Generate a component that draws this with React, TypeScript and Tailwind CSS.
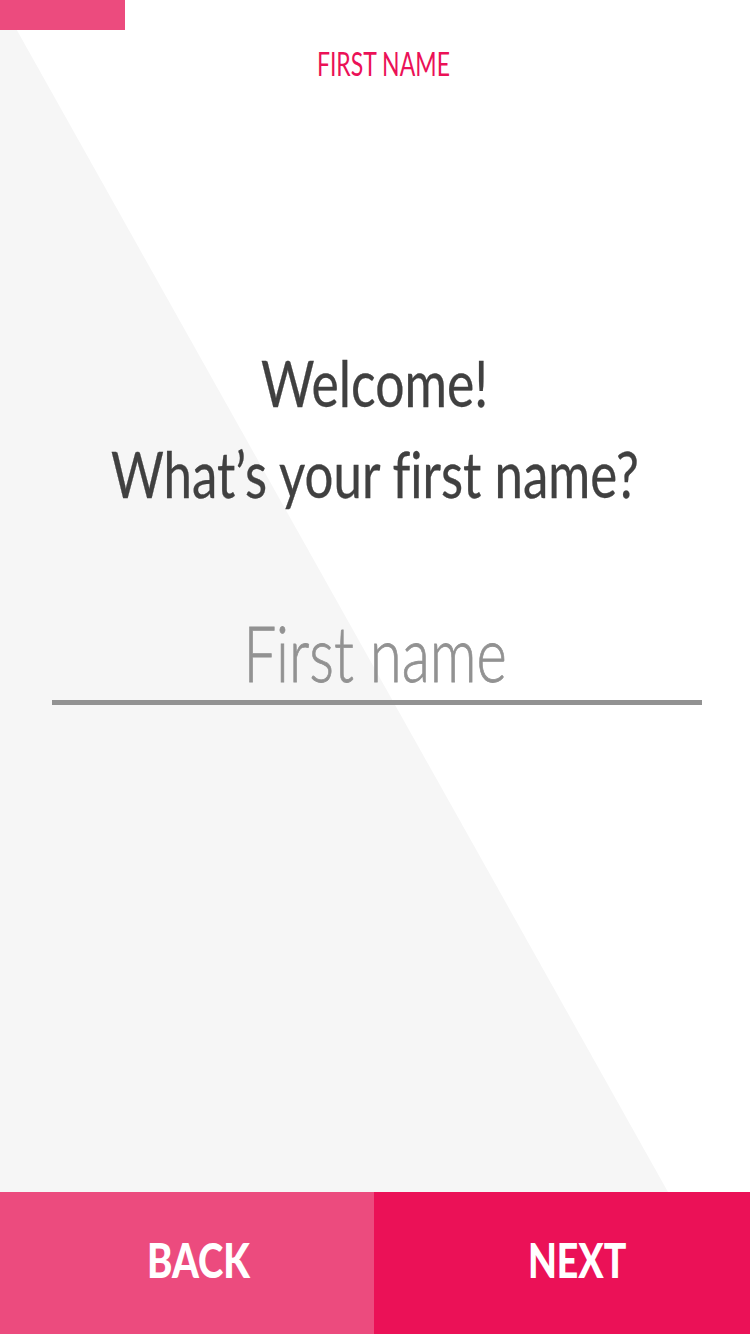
import React from "react";

const FONT = 'Lato, "Liberation Sans", sans-serif';

export default function App() {
  return (
    <div
      className="relative w-[750px] h-[1334px] overflow-hidden bg-white flex flex-col [font-variant-ligatures:none]"
      style={{ fontFamily: FONT }}
    >
      <svg
        className="absolute left-0 top-0"
        width="750"
        height="1334"
        viewBox="0 0 750 1334"
        aria-hidden="true"
      >
        <polygon points="0,0 668,1192 0,1192" fill="#f6f6f6" />
      </svg>

      <div className="relative flex flex-col flex-1">
        <div className="h-[30px] w-[125px] bg-[#ec4b7e]" />
        <div className="mt-[18px] flex justify-center pl-[16px]">
          <span className="inline-block origin-center scale-x-[0.72] whitespace-nowrap text-[32px] leading-none text-[#eb1157]">
            FIRST NAME
          </span>
        </div>

        <div className="mt-[257px] flex flex-col items-center text-[63px] leading-[91px] text-[#404040] [-webkit-text-stroke:0.3px_#404040]">
          <span className="inline-block origin-center scale-x-[0.82] whitespace-nowrap">Welcome!</span>
          <span className="inline-block origin-center scale-x-[0.81] whitespace-nowrap">What’s your first name?</span>
        </div>

        <div className="mt-[96px] flex justify-center">
          <span className="inline-block origin-center scale-x-[0.765] whitespace-nowrap text-[76px] font-light leading-none text-[#929292] [-webkit-text-stroke:0.8px_#929292]">
            First name
          </span>
        </div>
        <div className="mt-[9px] ml-[52px] w-[650px] h-[5px] bg-[#929292]" />
      </div>

      <div className="relative flex h-[142px]">
        <div className="w-[374px] h-full bg-[#ec4b7e] flex items-center justify-center pl-[22px] pb-[6px]">
          <span className="inline-block origin-center scale-x-[0.8] text-white font-black text-[48px] leading-none">BACK</span>
        </div>
        <div className="flex-1 h-full bg-[#eb1157] flex items-center justify-center pl-[30px] pb-[6px]">
          <span className="inline-block origin-center scale-x-[0.78] text-white font-black text-[48px] leading-none">NEXT</span>
        </div>
      </div>
    </div>
  );
}
